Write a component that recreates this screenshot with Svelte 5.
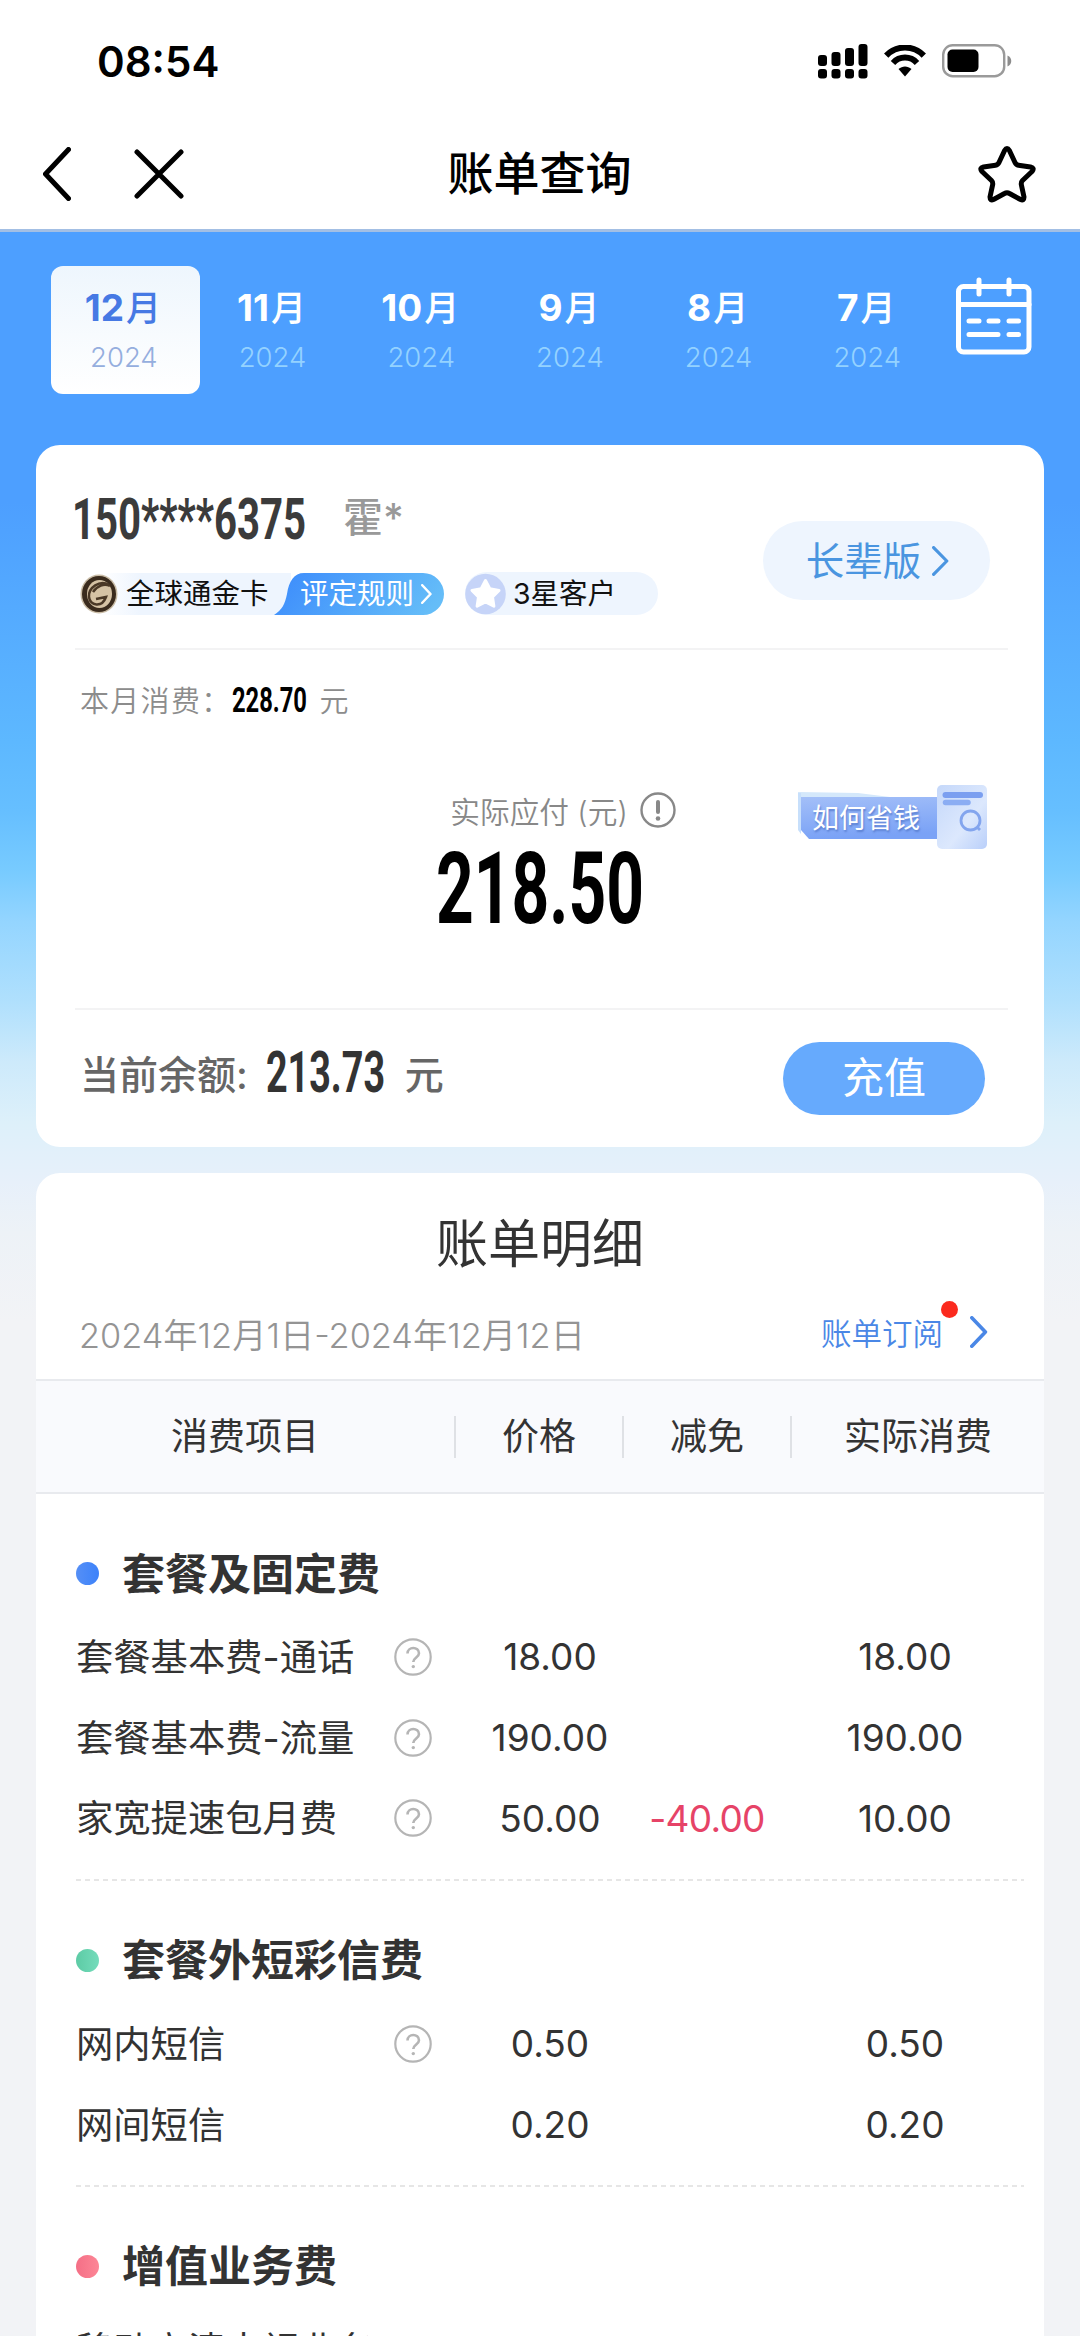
<script>
	const months = [
		{ month: '12', year: 2024 },
		{ month: '11', year: 2024 },
		{ month: '10', year: 2024 },
		{ month: '9', year: 2024 },
		{ month: '8', year: 2024 },
		{ month: '7', year: 2024 },
	]

	const columns = ['消费项目', '价格', '减免', '实际消费']

	const sections = [
		{
			name: '套餐及固定费',
			color: 'blue',
			rows: [
				{ name: '套餐基本费-通话', help: true, price: '18.00', off: '', paid: '18.00' },
				{ name: '套餐基本费-流量', help: true, price: '190.00', off: '', paid: '190.00' },
				{ name: '家宽提速包月费', help: true, price: '50.00', off: '-40.00', paid: '10.00' },
			],
		},
		{
			name: '套餐外短彩信费',
			color: 'green',
			rows: [
				{ name: '网内短信', help: true, price: '0.50', off: '', paid: '0.50' },
				{ name: '网间短信', help: false, price: '0.20', off: '', paid: '0.20' },
			],
		},
		{
			name: '增值业务费',
			color: 'red',
			rows: [
				{ name: '移动高清电视业务', help: false, price: '', off: '', paid: '' },
			],
		},
	]

	let selected = $state(0)

	// advance widths of Roboto Bold in em, everything else is a digit
	const advances = { '.': 0.29, '*': 0.45 }

	function naturalWidth(text, fontSize) {
		return [...text].reduce((sum, c) => sum + (advances[c] ?? 0.575) * fontSize, 0)
	}
</script>

<!-- narrow numerals: the text is squeezed to the given width -->
{#snippet narrow(text, width, height)}
	{@const fontSize = height / 0.725}
	{@const natural = naturalWidth(text, fontSize)}
	<svg class="narrow" {width} {height} viewBox="0 0 {natural} {height}" preserveAspectRatio="none">
		<text x="0" y={height - 0.5} font-size={fontSize} textLength={natural} lengthAdjust="spacingAndGlyphs">{text}</text>
	</svg>
{/snippet}

{#snippet chevron(width, height, stroke)}
	<svg class="chevron" {width} {height} viewBox="0 0 {width} {height}">
		<path d="M{stroke / 2} {stroke / 2}L{width - stroke} {height / 2}L{stroke / 2} {height - stroke / 2}" stroke-width={stroke} />
	</svg>
{/snippet}

<div class="page">
	<div class="status">
		<span class="time">08:54</span>
		<div class="status-icons">
			<svg width="50" height="36" viewBox="0 0 50 36">
				<rect x="0" y="12" width="9" height="11" rx="3" />
				<rect x="13.5" y="9" width="9" height="14" rx="3" />
				<rect x="27" y="5" width="9" height="18" rx="3" />
				<rect x="40.5" y="1" width="9" height="22" rx="3" />
				<rect x="0" y="26" width="9" height="9.5" rx="3" />
				<rect x="13.5" y="26" width="9" height="9.5" rx="3" />
				<rect x="27" y="26" width="9" height="9.5" rx="3" />
				<rect x="40.5" y="26" width="9" height="9.5" rx="3" />
			</svg>
			<svg class="wifi" width="42" height="32" viewBox="0 0 42 32">
				<path d="M2.2 10.6C12.5-.2 29.500-.2 39.800 10.600" />
				<path d="M9 18C15.500 10.800 26.500 10.800 33 18" />
				<path class="solid" d="M14.500 24C18.300 20.600 23.700 20.600 27.500 24L21 31.500Z" />
			</svg>
			<svg width="70" height="34" viewBox="0 0 70 34">
				<rect x="1.200" y="1.200" width="61" height="31" rx="9.500" fill="none" stroke="#9a9a9a" stroke-width="2.400" />
				<rect x="5.500" y="5.500" width="31" height="22.500" rx="5" />
				<path d="M65.500 11.500C70.500 13.500 70.500 20.500 65.500 22.500Z" fill="#8c8c8c" />
			</svg>
		</div>
	</div>

	<header>
		<div class="nav-left">
			<svg width="28" height="54" viewBox="0 0 28 54">
				<path d="M25.500 2.500L2.500 27L25.500 51.500" />
			</svg>
			<svg width="50" height="50" viewBox="0 0 50 50">
				<path d="M3 3L47 47M47 3L3 47" />
			</svg>
		</div>
		<h1>账单查询</h1>
		<svg class="fav" width="58" height="58" viewBox="0 0 58 58">
			<path d="M26.600 5.500Q29 1.500 31.400 5.500L37 17.500Q38 19.800 40.500 20.200L52.500 22Q57 23 54 26.500L44.500 35.500Q43 37 43.300 39.500L46 52Q46 56 42.500 54.500L31.500 48.500Q29 47 26.500 48.500L15.500 54.500Q12 56 12 52L14.700 39.500Q15 37 13.500 35.500L4 26.500Q1 23 5.500 22L17.500 20.200Q20 19.800 21 17.500Z" />
		</svg>
	</header>

	<main>
		<nav>
			{#each months as m, i}
				<button class="month" class:selected={i === selected} onclick={() => (selected = i)}>
					<strong>{m.month}<i>月</i></strong>
					<span>{m.year}</span>
				</button>
			{/each}
			<svg class="calendar" width="76" height="78" viewBox="0 0 76 78">
				<rect x="2.500" y="9.500" width="70.500" height="65.500" rx="5" />
				<path d="M3 27.500H73" />
				<path d="M23 3V17M53 3V17" />
				<path d="M13 44H23M33 44H42M53 44H62.500M13 57.500H42M53 57.500H62.500" />
			</svg>
		</nav>

		<section class="card account">
			<div class="owner">
				<div class="who">
					<div class="phone">
						{@render narrow('150****6375', 234, 41)}
						<span>霍*</span>
					</div>
					<div class="badges">
						<div class="gold">
							<svg width="38" height="40" viewBox="0 0 38 40">
								<ellipse cx="19" cy="20" rx="18.500" ry="19.500" fill="#c9bca6" />
								<ellipse cx="19" cy="20" rx="17" ry="18" fill="#3a2b1d" />
								<ellipse cx="19.500" cy="20" rx="12.500" ry="14" fill="#d5c2a4" />
								<path d="M29 11C20 5 8 14 9 23C10 32 22 34 26 23L16 25M13 18C17 12 24 9 30 12" fill="none" stroke="#4a3826" stroke-width="2.500" />
							</svg>
							<span>全球通金卡</span>
						</div>
						<div class="rules">
							<svg class="shape" width="170" height="42" viewBox="0 0 170 42">
								<defs>
									<linearGradient id="rule-fill" x1="0" y1="0.300" x2="1" y2="0.500">
										<stop offset="0" stop-color="#3d8dfc" />
										<stop offset="1" stop-color="#65bdf8" />
									</linearGradient>
								</defs>
								<path d="M30 0H149A21 21 0 0 1 149 42H0C8 37 11 31 13 21C15 8 20 0 30 0Z" fill="url(#rule-fill)" />
							</svg>
							<span>评定规则</span>
							{@render chevron(12, 20, 2.5)}
						</div>
						<div class="star">
							<svg width="41" height="42" viewBox="0 0 41 42">
								<circle cx="20.500" cy="21" r="20.300" fill="#c6d4f8" />
								<path d="M20.500 7.500L24.800 15.800L34 17.400L27.500 24L28.900 33.200L20.500 29L12.100 33.200L13.500 24L7 17.400L16.200 15.800Z" fill="#fff" stroke="#fff" stroke-width="3" stroke-linejoin="round" />
							</svg>
							<span>3星客户</span>
						</div>
					</div>
				</div>
				<div class="elder">
					<span>长辈版</span>
					{@render chevron(18, 30, 3.2)}
				</div>
			</div>

			<div class="spend">
				<div class="month-total">
					<span>本月消费：</span>
					{@render narrow('228.70', 75, 26)}
					<span>元</span>
				</div>
				<div class="due">
					<div class="due-label">
						<span>实际应付 (元)</span>
						<svg width="36" height="36" viewBox="0 0 36 36">
							<circle cx="18" cy="18" r="16.500" />
							<path d="M18 10V20" />
							<circle class="point" cx="18" cy="26.500" r="2.300" />
						</svg>
					</div>
					{@render narrow('218.50', 208, 73)}
				</div>
				<div class="save">
					<svg width="190" height="66" viewBox="0 0 190 66">
						<defs>
							<linearGradient id="save-fill" x1="0" y1="0" x2="0.200" y2="1">
								<stop offset="0" stop-color="#a3bff8" />
								<stop offset="1" stop-color="#7aa2f6" />
							</linearGradient>
							<linearGradient id="doc-fill" x1="0" y1="0" x2="1" y2="1">
								<stop offset="0" stop-color="#c5d8fa" />
								<stop offset="0.600" stop-color="#dce8fd" />
								<stop offset="1" stop-color="#b9cffa" />
							</linearGradient>
						</defs>
						<path d="M0 8L60 9L92 13H0Z" fill="#d4e8fb" />
						<path d="M0 9H3V50L0 46Z" fill="#c7dffb" />
						<path d="M3 13H140V55H11L3 46Z" fill="url(#save-fill)" />
						<rect x="139" y="1" width="50" height="64" rx="5" fill="url(#doc-fill)" />
						<path d="M147.500 11H182" stroke="#7b9ff0" stroke-width="6" stroke-linecap="round" />
						<path d="M147.500 18.500H170" stroke="#8badf3" stroke-width="5.500" stroke-linecap="round" />
						<circle cx="172.500" cy="36.500" r="9.500" fill="none" stroke="#83a5ee" stroke-width="2.800" />
						<path d="M179 43L182 46" stroke="#83a5ee" stroke-width="2.800" />
					</svg>
					<span>如何省钱</span>
				</div>
			</div>

			<div class="balance">
				<div class="amount">
					<strong>当前余额:</strong>
					{@render narrow('213.73', 119, 41)}
					<strong>元</strong>
				</div>
				<button><span>充值</span></button>
			</div>
		</section>

		<section class="card detail">
			<h2>账单明细</h2>
			<div class="period">
				<span class="range">2024年12月1日-2024年12月12日</span>
				<a href="#subscribe">账单订阅<i class="dot"></i>{@render chevron(19, 32, 3.6)}</a>
			</div>
			<div class="grid head">
				{#each columns as c}
					<span>{c}</span>
				{/each}
			</div>
			{#each sections as s}
				<div class="group">
					<h3><i class={s.color}></i>{s.name}</h3>
					{#each s.rows as r}
						<div class="grid row">
							<div class="item">
								<span>{r.name}</span>
								{#if r.help}
									<svg width="38" height="38" viewBox="0 0 38 38">
										<circle cx="19" cy="19" r="17.700" />
										<path d="M13.500 15.500C13.500 8.200 25 8.200 25 15.300C25 19.500 19.300 19.500 19.300 24" />
										<circle class="point" cx="19.300" cy="28.600" r="1.700" />
									</svg>
								{/if}
							</div>
							<span class="price">{r.price}</span>
							<span class="off">{r.off}</span>
							<span class="paid">{r.paid}</span>
						</div>
					{/each}
				</div>
			{/each}
		</section>
	</main>
</div>

<style>
	:global(body) {
		margin: 0;
		background: #f2f3f6;
	}

	.page {
		width: 1080px;
		height: 2336px;
		overflow: hidden;
		display: flex;
		flex-direction: column;
		font-family: Inter, "Noto Sans CJK SC", sans-serif;
		color: #333;
		background: #fff;
	}

	svg {
		display: block;
		flex: none;
	}

	button {
		border: 0;
		padding: 0;
		background: none;
		font: inherit;
		color: inherit;
	}

	i {
		font-style: normal;
	}

	.narrow {
		overflow: visible;
		font-family: Roboto, sans-serif;
		font-weight: 700;
	}

	.chevron {
		fill: none;
		stroke: currentColor;
		stroke-linecap: round;
		stroke-linejoin: round;
	}

	.status {
		height: 122px;
		flex: none;
		display: flex;
		align-items: center;
		justify-content: space-between;
		padding: 0 68px 0 97px;
		color: #000;
	}

	.time {
		font-size: 42px;
		font-weight: 600;
	}

	.status-icons {
		display: flex;
		align-items: center;
		gap: 16px;
	}

	.wifi {
		fill: none;
		stroke: #000;
		stroke-width: 6;
	}

	.wifi .solid {
		fill: #000;
		stroke: none;
	}

	header {
		height: 104px;
		flex: none;
		display: grid;
		grid-template-columns: 1fr auto 1fr;
		align-items: center;
		padding: 0 44px 3px 43px;
		border-bottom: 3px solid #a3bfe4;
		color: #000;
	}

	header path {
		fill: none;
		stroke: #000;
		stroke-width: 5;
		stroke-linecap: round;
		stroke-linejoin: round;
	}

	.nav-left {
		display: flex;
		align-items: center;
		gap: 63px;
	}

	h1 {
		margin: -2px 0 0;
		font-size: 46px;
		font-weight: 500;
		line-height: 60px;
	}

	.fav {
		justify-self: end;
	}

	main {
		height: 2104px;
		flex: none;
		display: flex;
		flex-direction: column;
		padding: 0 36px;
		background: linear-gradient(#4d9fff 0, #4d9fff 270px, #5db8ff 510px, #66bfff 580px, #78cbff 640px, #94d5ff 690px, #b0e0fd 770px, #cdeafb 830px, #ddf0fa 890px, #e7f0fa 950px, #edf2f7 1000px, #f2f3f6 1090px);
	}

	nav {
		height: 179px;
		flex: none;
		display: flex;
		padding: 34px 0 0 15px;
		color: #fff;
	}

	.month {
		width: 148.700px;
		height: 128px;
		display: flex;
		flex-direction: column;
		align-items: center;
		border-radius: 12px;
	}

	.month strong {
		margin: 18px 5px 0 0;
		font-size: 37px;
		line-height: 48px;
		font-weight: 700;
	}

	.month i {
		font-size: 35px;
		font-weight: 500;
		margin-left: 2px;
	}

	.month span {
		margin: 8px 3px 0 0;
		font-size: 27.500px;
		line-height: 34px;
		font-weight: 350;
		color: #94d2ff;
	}

	.month.selected {
		background: linear-gradient(#eef6fd, #fff);
		color: #4679e4;
	}

	.month.selected span {
		color: #95aede;
	}

	.calendar {
		margin: 11px 0 0 13px;
		fill: none;
		stroke: #fff;
		stroke-width: 5;
		stroke-linecap: round;
	}

	.card {
		background: #fff;
		border-radius: 24px;
	}

	.account {
		height: 702px;
		flex: none;
		display: flex;
		flex-direction: column;
	}

	.owner {
		height: 203px;
		display: flex;
		justify-content: space-between;
		margin: 0 36px 0 39px;
		border-bottom: 2px solid #f3f3f4;
	}

	.phone {
		display: flex;
		align-items: center;
		gap: 37px;
		margin: 43px 0 0 -3px;
		height: 60px;
		fill: #3b3b3b;
	}

	.phone span {
		font-size: 40px;
		font-weight: 500;
		line-height: 60px;
		color: #999;
	}

	.badges {
		display: flex;
		align-items: center;
		margin: 24px 0 0 5px;
		font-size: 28.500px;
		line-height: 42px;
		color: #111;
	}

	.gold {
		display: flex;
		align-items: center;
		gap: 8px;
		width: 211px;
		background: linear-gradient(90deg, #fff 20px, #eef5fe 60px);
	}

	.rules {
		position: relative;
		width: 170px;
		height: 42px;
		margin-left: -17px;
		display: flex;
		align-items: center;
		color: #fff;
	}

	.rules .shape {
		position: absolute;
		inset: 0;
	}

	.rules span {
		position: relative;
		margin: 0 7px 0 26px;
	}

	.rules :global(.chevron) {
		position: relative;
	}

	.star {
		display: flex;
		align-items: center;
		gap: 7px;
		width: 193px;
		height: 43px;
		margin-left: 21px;
		border-radius: 22px;
		background: #eef5fe;
	}

	.elder {
		width: 227px;
		height: 79px;
		margin: 76px 18px 0 0;
		display: flex;
		align-items: center;
		justify-content: center;
		gap: 11px;
		border-radius: 40px;
		background: #eef5fe;
		color: #4a95e0;
		font-size: 38.500px;
	}

	.elder span {
		margin: -6px 0 0 3px;
	}

	.spend {
		position: relative;
		height: 358px;
		margin: 0 36px 0 39px;
		border-bottom: 2px solid #f3f3f4;
	}

	.month-total {
		display: flex;
		align-items: center;
		height: 40px;
		padding: 29px 0 0 5px;
		font-size: 29px;
		letter-spacing: 1.300px;
		font-weight: 350;
		color: #8c8c8c;
	}

	.month-total :global(.narrow) {
		margin-right: 13px;
		fill: #000;
		letter-spacing: 0;
	}

	.due {
		display: flex;
		flex-direction: column;
		align-items: center;
		margin: 69px 3px 0 0;
		gap: 18px;
	}

	.due-label {
		display: flex;
		align-items: center;
		gap: 12px;
		height: 44px;
		margin-left: 46px;
		font-size: 29.700px;
		font-weight: 350;
		color: #888;
	}

	.due-label svg {
		fill: none;
		stroke: #888;
		stroke-width: 2.400;
	}

	.due-label path {
		stroke-width: 4;
		stroke-linecap: round;
	}

	.due-label .point {
		fill: #888;
		stroke: none;
	}

	/* promo tag floats over the right side of the amount */
	.save {
		position: absolute;
		right: 20px;
		top: 134px;
		width: 190px;
		height: 66px;
	}

	.save span {
		position: absolute;
		left: 14px;
		top: 15px;
		font-size: 27px;
		line-height: 40px;
		color: #fff;
		text-shadow: 1px 2px 2px #5a7fd0;
	}

	.balance {
		flex: 1;
		display: flex;
		align-items: center;
		justify-content: space-between;
		margin: 0 59px 0 44px;
		fill: #333;
	}

	.amount {
		display: flex;
		align-items: center;
		margin-bottom: 14px;
	}

	.amount strong {
		font-size: 39px;
		font-weight: 500;
		color: #666;
	}

	.amount :global(.narrow) {
		margin: 0 20px 0 18px;
	}

	.balance button {
		width: 202px;
		height: 73px;
		display: flex;
		justify-content: center;
		border-radius: 37px;
		background: #66aafd;
		color: #fff;
		font-size: 42px;
		line-height: 72px;
	}

	.detail {
		margin-top: 26px;
		flex: 1;
		border-radius: 24px 24px 0 0;
	}

	h2 {
		margin: 0;
		padding-top: 32px;
		font-size: 52px;
		line-height: 80px;
		font-weight: 400;
		text-align: center;
	}

	.period {
		height: 94px;
		display: flex;
		align-items: center;
		justify-content: space-between;
		padding: 0 55px 0 43px;
	}

	.range {
		margin-top: 2px;
		font-size: 34.300px;
		font-weight: 350;
		color: #949494;
	}

	a {
		position: relative;
		display: flex;
		align-items: center;
		gap: 27px;
		font-size: 30.500px;
		font-weight: 350;
		color: #4a87e6;
		text-decoration: none;
	}

	.dot {
		position: absolute;
		left: 120px;
		top: -9px;
		width: 17px;
		height: 17px;
		border-radius: 50%;
		background: #fb2a1e;
	}

	.grid {
		display: grid;
		grid-template-columns: 420px 168px 168px 252px;
		align-items: center;
		text-align: center;
	}

	.head {
		height: 111px;
		border-top: 2px solid #e8eaee;
		border-bottom: 2px solid #e8eaee;
		background: #f9fafd;
		font-size: 37px;
	}

	.head span {
		line-height: 42px;
		border-right: 2px solid #dfe1e5;
	}

	.head span:last-child {
		border: 0;
	}

	.group {
		padding: 49.500px 0 22px;
		background: repeating-linear-gradient(90deg, #e6e6e6 0 5px, #fff 5px 9px) bottom right 20px / 948px 2px no-repeat;
	}

	h3 {
		display: flex;
		align-items: center;
		gap: 23px;
		margin: 0 0 13px 40px;
		font-size: 43px;
		line-height: 60px;
		font-weight: 700;
	}

	h3 i {
		width: 23px;
		height: 23px;
		border-radius: 50%;
	}

	.blue {
		background: linear-gradient(90deg, #558ff6, #3c82fa);
	}

	.green {
		background: linear-gradient(90deg, #5dcba5, #74dcbb);
	}

	.red {
		background: linear-gradient(90deg, #f46f86, #fd8696);
	}

	.row {
		height: 80.800px;
		font-size: 37px;
	}

	.price {
		padding-left: 20px;
	}

	.paid {
		padding-right: 26px;
	}

	.item {
		display: flex;
		align-items: center;
		justify-content: space-between;
		padding: 0 24px 0 40px;
		font-size: 37.300px;
	}

	.item span {
		margin-top: -4px;
	}

	.item svg {
		fill: none;
		stroke: #b5b5b5;
		stroke-width: 2.200;
	}

	.item path {
		stroke-width: 2.600;
	}

	.item .point {
		fill: #b5b5b5;
		stroke: none;
	}

	.off {
		padding-right: 2px;
		letter-spacing: -0.700px;
		color: #e64367;
	}
</style>
